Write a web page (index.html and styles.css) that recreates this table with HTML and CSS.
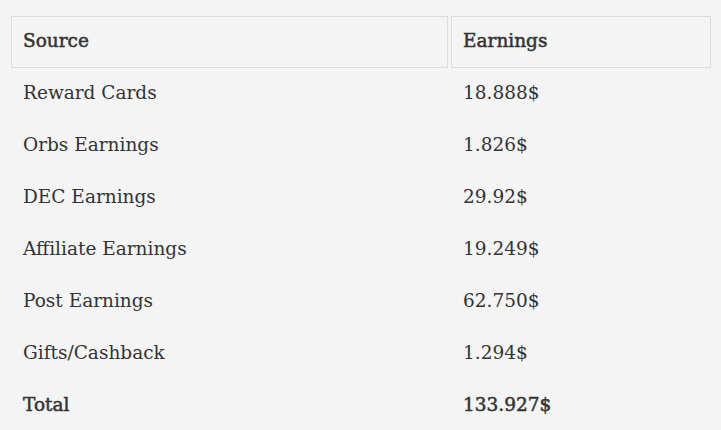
FILE: index.html
```html
<!DOCTYPE html>
<html>
<head>
<meta charset="utf-8">
<link rel="stylesheet" href="styles.css">
</head>
<body>
<div class="page">
  <table class="earnings">
    <colgroup><col class="c1"><col class="c2"></colgroup>
    <thead>
      <tr><th>Source</th><th>Earnings</th></tr>
    </thead>
    <tbody>
      <tr><td>Reward Cards</td><td>18.888$</td></tr>
      <tr><td>Orbs Earnings</td><td>1.826$</td></tr>
      <tr><td>DEC Earnings</td><td>29.92$</td></tr>
      <tr><td>Affiliate Earnings</td><td>19.249$</td></tr>
      <tr><td>Post Earnings</td><td>62.750$</td></tr>
      <tr><td>Gifts/Cashback</td><td>1.294$</td></tr>
      <tr class="total"><td>Total</td><td>133.927$</td></tr>
    </tbody>
  </table>
</div>
</body>
</html>
```
FILE: styles.css
```css
html, body {
  margin: 0;
  background: #f4f4f4;
}
.page {
  padding: 16px 0 0 8px;
  font-family: "DejaVu Serif", serif;
  color: #333;
}
.earnings {
  border-collapse: separate;
  border-spacing: 3px 0;
  table-layout: fixed;
  width: 706px;
  font-size: 18.5px;
}
.c1 { width: 437px; }
.c2 { width: 260px; }
.earnings th,
.earnings td {
  box-sizing: border-box;
  height: 52px;
  padding: 0 11px 4px;
  text-align: left;
  vertical-align: middle;
  border: 1px solid transparent;
  font-weight: normal;
}
.earnings th {
  border-color: #dcdcdc;
  -webkit-text-stroke: 0.5px #333;
}
.total td {
  -webkit-text-stroke: 0.5px #333;
}
```
